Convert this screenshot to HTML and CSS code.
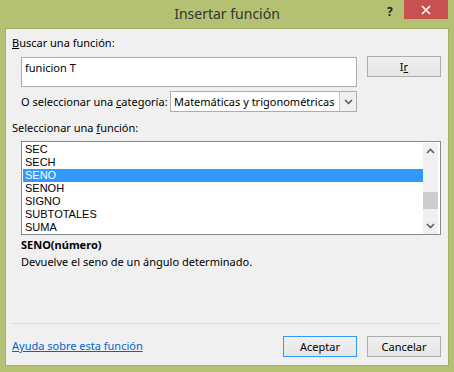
FILE: index.html
```
<html lang="es">
<head>
    <meta charset="UTF-8">
    <title>Insertar función</title>
    <link rel="stylesheet" href="styles.css">
</head>
<body>

<div class="dialog">
  <div class="title_bar">
    <span class="title_text">Insertar función</span>
    <span class="help_btn">?</span>
    <span class="close_btn">
      <svg width="10" height="10" viewBox="0 0 10 10"><path d="M1 1 L9 9 M9 1 L1 9" stroke="#fff" stroke-width="1.6"/></svg>
    </span>
  </div>

  <div class="panel">
    <div class="lbl"><u>B</u>uscar una función:</div>

    <div class="search_row">
      <div class="search_box">funicion T</div>
      <button type="button" class="btn btn-ir">I<u>r</u></button>
    </div>

    <div class="cat_row">
      <span class="cat_lbl">O seleccionar una <u>c</u>ategoría:</span>
      <div class="select_box">
        <span class="select_val">Matemáticas y trigonométricas</span>
        <span class="select_arrow">
          <svg width="9" height="6" viewBox="0 0 9 6"><path d="M1 1 L4.5 4.5 L8 1" fill="none" stroke="#555" stroke-width="1.5"/></svg>
        </span>
      </div>
    </div>

    <div class="lbl lbl-list">Seleccionar una <u>f</u>unción:</div>

    <div class="listbox">
      <ul class="fn_list">
        <li>SEC</li>
        <li>SECH</li>
        <li class="selected">SENO</li>
        <li>SENOH</li>
        <li>SIGNO</li>
        <li>SUBTOTALES</li>
        <li>SUMA</li>
      </ul>
      <div class="scrollbar">
        <svg class="sb_arrow" width="9" height="6" viewBox="0 0 9 6"><path d="M1 5 L4.5 1.5 L8 5" fill="none" stroke="#606060" stroke-width="1.6"/></svg>
        <div class="sb_track"><div class="sb_thumb"></div></div>
        <svg class="sb_arrow" width="9" height="6" viewBox="0 0 9 6"><path d="M1 1 L4.5 4.5 L8 1" fill="none" stroke="#606060" stroke-width="1.6"/></svg>
      </div>
    </div>

    <div class="fn_sig">SENO(número)</div>
    <div class="fn_desc">Devuelve el seno de un ángulo determinado.</div>

    <div class="separator"></div>

    <div class="footer">
      <a href="#" class="help_link">Ayuda sobre esta función</a>
      <div class="footer_btns">
        <button type="button" class="btn btn-default">Aceptar</button>
        <button type="button" class="btn">Cancelar</button>
      </div>
    </div>
  </div>
</div>

</body>
</html>
```

FILE: styles.css
```
body{
  margin: 0;
  background-color: #b4c172;
  font-family: 'Noto Sans', sans-serif;
  font-size: 11px;
  color: #000;
  white-space: nowrap;
}
u{
  text-decoration: underline;
  text-underline-offset: 1px;
}

.dialog{
  width: 454px;
  height: 372px;
  display: flex;
  flex-direction: column;
}

.title_bar{
  height: 28px;
  position: relative;
  display: flex;
  justify-content: center;
  align-items: center;
}
.title_text{
  font-size: 14px;
  color: #333;
  margin-top: -1px;
}
.help_btn{
  position: absolute;
  left: 387px;
  top: 3px;
  font-size: 12px;
  font-weight: bold;
  color: #222;
}
.close_btn{
  position: absolute;
  left: 404px;
  top: 0;
  width: 44px;
  height: 19px;
  background-color: #c75050;
  display: flex;
  align-items: center;
  justify-content: center;
}

.panel{
  margin: 0 5px;
  height: 336px;
  background-color: #f0f0f0;
  border: 1px solid #a3af62;
  padding: 0 7px 0 6px;
  display: flex;
  flex-direction: column;
}

.lbl{
  margin-top: 6px;
  line-height: 16px;
}
.lbl-list{
  margin-top: 8px;
}

.search_row{
  margin-top: 5px;
  margin-left: 9px;
  display: flex;
  align-items: flex-start;
  gap: 10px;
}
.search_box{
  margin-top: 1px;
  width: 336px;
  height: 30px;
  box-sizing: border-box;
  background-color: #fff;
  border: 1px solid #abadb3;
  padding: 2px 3px;
  line-height: 16px;
}

.btn{
  font-family: 'Noto Sans', sans-serif;
  font-size: 11px;
  color: #000;
  width: 74px;
  height: 21px;
  box-sizing: border-box;
  border: 1px solid #acacac;
  background: linear-gradient(#f0f0f0, #e5e5e5);
  padding: 0;
  line-height: 18px;
}
.btn-default{
  border-color: #3399ff;
}

.cat_row{
  margin-top: 4px;
  margin-left: 9px;
  display: flex;
  align-items: center;
}
.cat_lbl{
  width: 149px;
}
.select_box{
  width: 187px;
  height: 21px;
  box-sizing: border-box;
  background-color: #fff;
  border: 1px solid #abadb3;
  display: flex;
  align-items: center;
}
.select_val{
  flex: 1;
  padding-left: 3px;
}
.select_arrow{
  width: 16px;
  height: 19px;
  border-left: 1px solid #c8c8c8;
  background-color: #f0f0f0;
  display: flex;
  align-items: center;
  justify-content: center;
}

.listbox{
  margin-top: 5px;
  margin-left: 9px;
  width: 420px;
  height: 94px;
  box-sizing: border-box;
  background-color: #fff;
  border: 1px solid #828790;
  padding: 1px 2px 0 1px;
  display: flex;
}
.fn_list{
  flex: 1;
  list-style: none;
  margin: 0;
  padding: 0;
}
.fn_list li{
  height: 13px;
  line-height: 13px;
  padding-left: 2px;
  box-sizing: border-box;
  font-family: 'Liberation Sans', sans-serif;
  font-size: 11px;
}
.fn_list li.selected{
  background-color: #3399ff;
  color: #fff;
  outline: 1px dotted #c8782a;
  outline-offset: -1px;
}
.scrollbar{
  width: 15px;
  height: 91px;
  background-color: #f0f0f0;
  display: flex;
  flex-direction: column;
  align-items: center;
}
.sb_arrow{
  margin: 5px 0;
}
.sb_track{
  flex: 1;
  width: 15px;
  display: flex;
  flex-direction: column;
  justify-content: flex-end;
  padding-bottom: 9px;
}
.sb_thumb{
  height: 17px;
  background-color: #cdcdcd;
}

.fn_sig{
  margin-top: 2px;
  margin-left: 9px;
  font-weight: bold;
  line-height: 16px;
}
.fn_desc{
  margin-top: 1px;
  margin-left: 9px;
  line-height: 16px;
}

.separator{
  margin-top: auto;
  height: 1px;
  background-color: #dcdcdc;
}

.footer{
  margin-top: 12px;
  margin-bottom: 8px;
  display: flex;
  align-items: center;
  justify-content: space-between;
}
.help_link{
  color: #0066cc;
  text-decoration: underline;
  margin-top: -2px;
}
.footer_btns{
  display: flex;
  gap: 10px;
}
```
